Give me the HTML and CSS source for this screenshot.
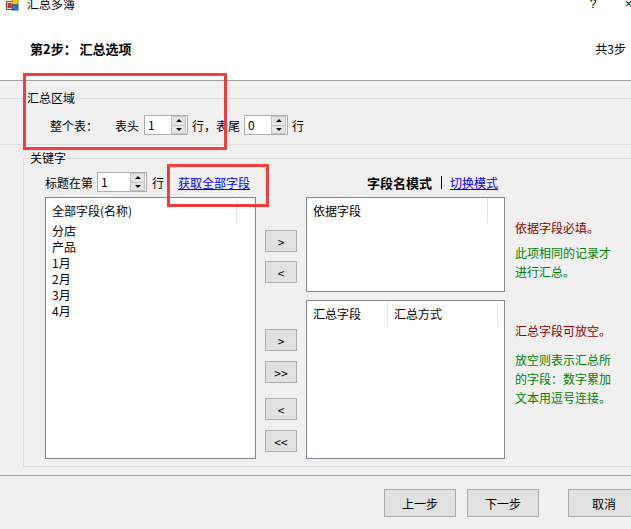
FILE: index.html
```html
<!DOCTYPE html>
<html lang="zh-CN">
<head>
    <meta charset="UTF-8">
    <title>汇总多簿</title>
    <link rel="stylesheet" href="styles.css">
</head>
<body>
<div class="window">
    <div class="top">
        <div class="titlebar">
            <svg class="app-icon" width="13" height="13" viewBox="0 0 13 13">
                <rect x="0.5" y="3.5" width="6" height="8" fill="#e8e8e8" stroke="#8a4a2a"/>
                <rect x="1.5" y="5" width="4" height="5" fill="#c0392b"/>
                <rect x="6" y="0.5" width="6" height="6" fill="#f5c518" stroke="#b08a10"/>
                <rect x="6" y="7" width="6" height="5" fill="#3a78d8" stroke="#1f4f9a"/>
            </svg>
            <span class="title">汇总多簿</span>
            <span class="help">?</span>
            <span class="close">×</span>
        </div>
        <div class="step">
            <h3>第2步： 汇总选项</h3>
            <span class="step-count">共3步</span>
        </div>
    </div>

    <fieldset class="group group-area">
        <legend>汇总区域</legend>
        <div class="area-row">
            <span class="whole">整个表：</span>
            <span class="head-label">表头</span>
            <div class="spin">
                <span class="value">1</span>
                <div class="spin-btns"><i class="up"></i><i class="down"></i></div>
            </div>
            <span class="after-spin">行，表尾</span>
            <div class="spin">
                <span class="value">0</span>
                <div class="spin-btns"><i class="up"></i><i class="down"></i></div>
            </div>
            <span class="after-spin">行</span>
        </div>
    </fieldset>

    <fieldset class="group group-keys">
        <legend>关键字</legend>
        <div class="key-head">
            <div class="title-row">
                <span>标题在第</span>
                <div class="spin spin-wide">
                    <span class="value">1</span>
                    <div class="spin-btns"><i class="up"></i><i class="down"></i></div>
                </div>
                <span class="after-spin">行</span>
                <a href="#" class="link fetch">获取全部字段</a>
            </div>
            <div class="mode">
                <b>字段名模式</b>
                <span class="bar"></span>
                <a href="#" class="link">切换模式</a>
            </div>
        </div>

        <div class="key-body">
            <div class="listbox list-all">
                <div class="list-header">
                    <span class="col" style="width: 184px;">全部字段(名称)</span>
                </div>
                <ul class="items">
                    <li>分店</li>
                    <li>产品</li>
                    <li>1月</li>
                    <li>2月</li>
                    <li>3月</li>
                    <li>4月</li>
                </ul>
            </div>

            <div class="right-part">
                <div class="pane pane-basis">
                    <div class="arrows">
                        <button>&gt;</button>
                        <button>&lt;</button>
                    </div>
                    <div class="listbox list-basis">
                        <div class="list-header">
                            <span class="col" style="width: 174px;">依据字段</span>
                        </div>
                    </div>
                    <div class="notes">
                        <p class="warn">依据字段必填。</p>
                        <p class="hint">此项相同的记录才<br>进行汇总。</p>
                    </div>
                </div>

                <div class="pane pane-sum">
                    <div class="arrows">
                        <button>&gt;</button>
                        <button>&gt;&gt;</button>
                        <button class="gap">&lt;</button>
                        <button>&lt;&lt;</button>
                    </div>
                    <div class="listbox list-sum">
                        <div class="list-header">
                            <span class="col" style="width: 74px;">汇总字段</span>
                            <span class="col" style="width: 103px;">汇总方式</span>
                        </div>
                    </div>
                    <div class="notes">
                        <p class="warn">汇总字段可放空。</p>
                        <p class="hint">放空则表示汇总所<br>的字段：数字累加<br>文本用逗号连接。</p>
                    </div>
                </div>
            </div>
        </div>
    </fieldset>

    <div class="footer">
        <button>上一步</button>
        <button>下一步</button>
        <button class="cancel">取消</button>
    </div>

    <!-- red highlight marks drawn over the dialog -->
    <div class="mark mark-area"></div>
    <div class="mark mark-fetch"></div>
</div>
</body>
</html>
```

FILE: styles.css
```css
body {
    margin: 0;
    padding: 0;
    font-family: "Noto Sans CJK SC", "Liberation Sans", sans-serif;
    font-size: 12px;
    color: #000;
    background-color: #f0f0f0;
}

.window {
    position: relative;
    width: 631px;
    height: 529px;
    overflow: hidden;
    background-color: #f0f0f0;
}

/* top white header */
.top {
    display: flow-root;
    height: 80px;
    background-color: #fff;
    border-bottom: 1px solid #a0a0a0;
}

.titlebar {
    display: flex;
    align-items: center;
    height: 14px;
    margin-top: -3px;
    padding-left: 6px;
    line-height: 14px;
}

.app-icon {
    margin-right: 8px;
}

.title {
    font-size: 12px;
}

.help, .close {
    font-family: "Liberation Sans", sans-serif;
    font-size: 12px;
}

.help {
    margin-left: auto;
    width: 10px;
    text-align: center;
    margin-right: 27px;
}

.close {
    width: 16px;
    margin-right: -10px;
}

.step {
    display: flex;
    justify-content: space-between;
    align-items: center;
    height: 20px;
    margin-top: 27px;
    padding: 0 5px 0 30px;
}

.step h3 {
    margin: 0;
    font-size: 13px;
    font-weight: bold;
}

/* group boxes */
.group {
    min-width: 0;
    border: 1px solid #dcdcdc;
    padding: 0;
}

.group legend {
    padding: 0 1px;
    line-height: 16px;
}

.group-area {
    margin: 9px -10px 0 -4px;
    padding: 9px 0 9px 53px;
}

.group-area legend {
    margin-left: -24px;
}

.group-keys {
    margin: 5px -10px 0 23px;
    padding: 6px 0 7px 21px;
}

.group-keys legend {
    margin-left: -16px;
}

.area-row, .title-row {
    display: flex;
    align-items: center;
    height: 20px;
}

.head-label {
    margin-left: 17px;
    margin-right: 5px;
}

.after-spin {
    margin-left: 4px;
    margin-right: 4px;
}

/* spin box */
.spin {
    display: flex;
    align-items: center;
    width: 44px;
    height: 20px;
    box-sizing: border-box;
    border: 1px solid #abadb3;
    background-color: #fff;
}

.spin-wide {
    width: 50px;
    margin-left: 4px;
}

.spin .value {
    flex: 1;
    padding-left: 3px;
    line-height: 18px;
}

.spin-btns {
    display: flex;
    flex-direction: column;
    width: 13px;
    height: 16px;
    margin-right: 1px;
    border: 1px solid #c2c2c2;
    background-color: #e6e6e6;
}

.spin-btns i {
    flex: 1;
    display: flex;
    align-items: center;
    justify-content: center;
}

.spin-btns i.down {
    border-top: 1px solid #c2c2c2;
}

.spin-btns i.up::before {
    content: "";
    border-left: 3px solid transparent;
    border-right: 3px solid transparent;
    border-bottom: 3px solid #000;
}

.spin-btns i.down::before {
    content: "";
    border-left: 3px solid transparent;
    border-right: 3px solid transparent;
    border-top: 3px solid #000;
}

.title-row .after-spin {
    margin-left: 5px;
    margin-right: 14px;
}

.link {
    color: #0000ff;
    text-decoration: underline;
}

/* keyword area */
.key-head {
    display: flex;
    height: 20px;
}

.title-row {
    width: 261px;
}

.mode {
    display: flex;
    align-items: center;
    justify-content: flex-end;
    width: 192px;
    padding-right: 7px;
}

.mode b {
    font-size: 13px;
}

.mode .bar {
    width: 1px;
    height: 13px;
    background-color: #000;
    margin: 0 8px 0 9px;
}

.key-body {
    display: flex;
    margin-top: 5px;
}

.listbox {
    box-sizing: border-box;
    border: 1px solid #828790;
    background-color: #fff;
}

.list-header {
    display: flex;
    height: 25px;
}

.list-header .col {
    padding-left: 6px;
    line-height: 25px;
    border-right: 1px solid #e5e5e5;
}

.list-all {
    width: 211px;
    height: 262px;
    margin-right: 9px;
}

.items {
    list-style: none;
    margin: 0;
    padding: 0 0 0 6px;
}

.items li {
    line-height: 16px;
}

.right-part {
    display: flex;
    flex-direction: column;
    gap: 8px;
}

.pane {
    display: flex;
}

.pane-basis {
    height: 95px;
}

.pane-sum {
    height: 159px;
}

.arrows {
    display: flex;
    flex-direction: column;
    width: 32px;
    margin-right: 9px;
}

.arrows button {
    width: 32px;
    height: 22px;
    padding: 0;
    font-family: inherit;
    font-size: 12px;
    color: #000;
    background-color: #e1e1e1;
    border: 1px solid #adadad;
}

.pane-basis .arrows {
    padding-top: 33px;
    gap: 9px;
}

.pane-sum .arrows {
    padding-top: 29px;
    gap: 10px;
}

.pane-sum .arrows .gap {
    margin-top: 5px;
}

.list-basis, .list-sum {
    width: 199px;
    height: 100%;
}

.notes {
    margin-left: 10px;
    padding-top: 21px;
    white-space: nowrap;
}

.notes p {
    margin: 0;
    line-height: 19px;
}

.notes .warn {
    color: #8b0000;
}

.notes .hint {
    color: #008000;
    margin-top: 6px;
}

.pane-sum .notes .hint {
    margin-top: 10px;
}

/* bottom buttons */
.footer {
    display: flex;
    gap: 11px;
    margin-top: 8px;
    padding: 13px 0 0 384px;
    border-top: 1px solid #a0a0a0;
}

.footer button {
    flex: none;
    width: 72px;
    height: 28px;
    padding: 0;
    font-family: inherit;
    font-size: 12px;
    color: #000;
    background-color: #e1e1e1;
    border: 1px solid #adadad;
}

.footer .cancel {
    margin-left: 18px;
}

/* red highlight boxes */
.mark {
    position: absolute;
    box-sizing: border-box;
    border: 3px solid #f43c3c;
}

.mark-area {
    left: 23px;
    top: 73px;
    width: 204px;
    height: 77px;
}

.mark-fetch {
    left: 167px;
    top: 164px;
    width: 102px;
    height: 43px;
}
```
